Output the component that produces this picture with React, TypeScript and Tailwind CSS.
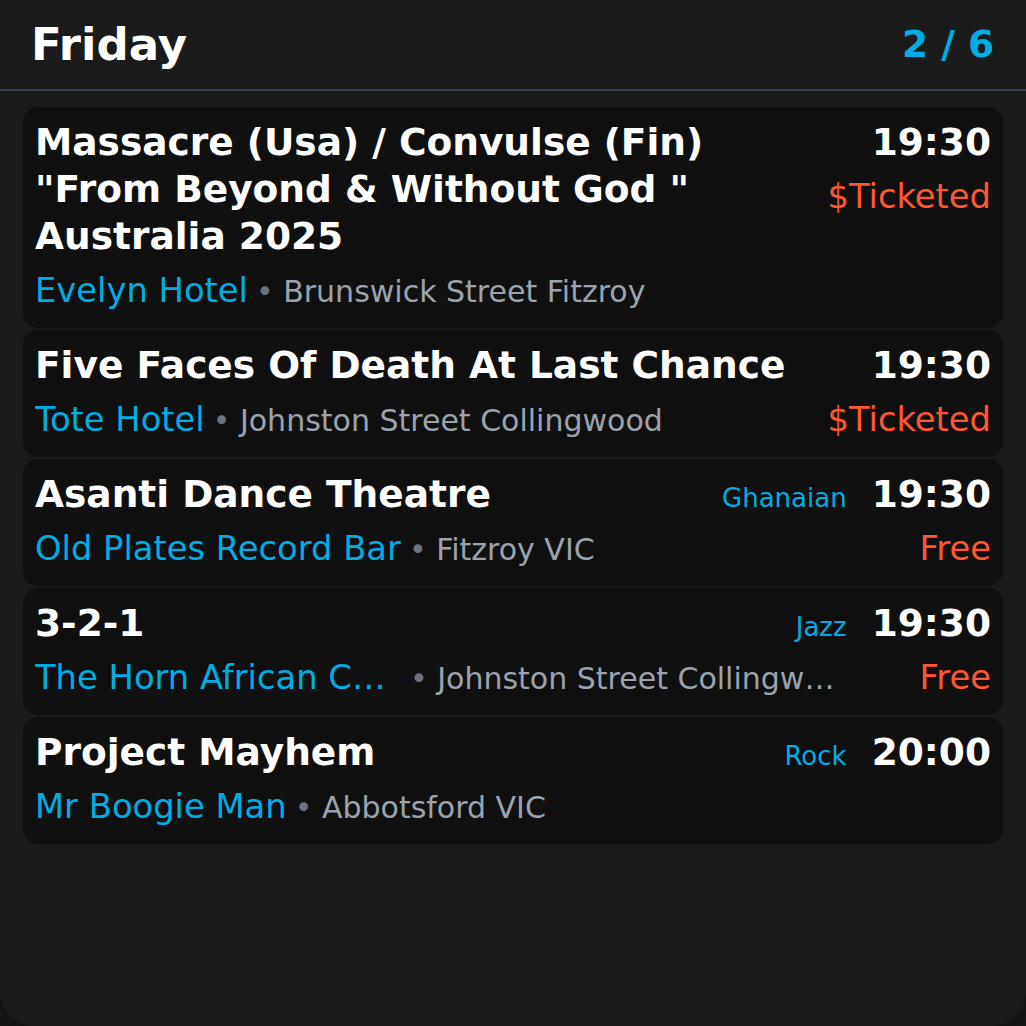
const events = [
  {
    title: 'Massacre (Usa) / Convulse (Fin) "From Beyond & Without God " Australia 2025',
    venue: "Evelyn Hotel",
    address: "Brunswick Street Fitzroy",
    time: "19:30",
    price: "$Ticketed",
  },
  {
    title: "Five Faces Of Death At Last Chance",
    venue: "Tote Hotel",
    address: "Johnston Street Collingwood",
    time: "19:30",
    price: "$Ticketed",
  },
  {
    title: "Asanti Dance Theatre",
    venue: "Old Plates Record Bar",
    address: "Fitzroy VIC",
    time: "19:30",
    price: "Free",
    tag: "Ghanaian",
  },
  {
    title: "3-2-1",
    venue: "The Horn African Cafe & Bar",
    address: "Johnston Street Collingwood VIC",
    time: "19:30",
    price: "Free",
    tag: "Jazz",
  },
  {
    title: "Project Mayhem",
    venue: "Mr Boogie Man",
    address: "Abbotsford VIC",
    time: "20:00",
    tag: "Rock",
  },
];

type Ev = (typeof events)[number] & { tag?: string; price?: string };

function EventCard({ ev }: { ev: Ev }) {
  return (
    <div className="flex gap-[25px] rounded-[15px] bg-[#101010] px-[12px] pt-[12px] pb-[12px]">
      <div className="min-w-0 flex-1">
        <div className="flex items-baseline gap-[24px]">
          <div className="min-w-0 flex-1 text-[37.5px] font-bold leading-[47px] text-white">
            {ev.title}
          </div>
          {ev.tag && (
            <span className="shrink-0 text-[26px] leading-[30px] text-[#00ade3]">{ev.tag}</span>
          )}
        </div>
        <div className="mt-[6px] flex h-[50px] items-baseline">
          <span className="max-w-[367px] shrink-0 truncate text-[33.75px] leading-[50px] text-[#00ade3]">
            {ev.venue}
          </span>
          <span className="ml-[8px] min-w-0 flex-1 truncate text-[30px] leading-[42px] text-[#9ca3af]">
            <span className="text-[#6b7280]">•</span> {ev.address}
          </span>
        </div>
      </div>
      <div className="flex shrink-0 flex-col items-end">
        <span className="text-[37.5px] font-bold leading-[47px] text-white">{ev.time}</span>
        {ev.price && (
          <span className="mt-[6px] text-[33.75px] leading-[50px] text-[#ff5733]">{ev.price}</span>
        )}
      </div>
    </div>
  );
}

export default function App() {
  return (
    <div
      className="min-h-screen bg-[#171717]"
      style={{ fontFamily: '"DejaVu Sans", sans-serif' }}
    >
      <div className="h-[1026px] w-[1026px] overflow-hidden rounded-b-[34px] bg-[#1b1b1b] shadow-[0_0_20px_rgba(0,0,0,0.25)]">
        <div className="flex h-[91px] items-center justify-between border-b-2 border-[#374151] pl-[31px] pr-[32px]">
          <span className="text-[45px] font-bold text-white">Friday</span>
          <span className="text-[37.5px] font-bold text-[#00ade3]">2 / 6</span>
        </div>
        <div className="flex flex-col gap-[2px] px-[23px] pt-[16px]">
          {events.map((ev) => (
            <EventCard key={ev.title} ev={ev as Ev} />
          ))}
        </div>
      </div>
    </div>
  );
}
